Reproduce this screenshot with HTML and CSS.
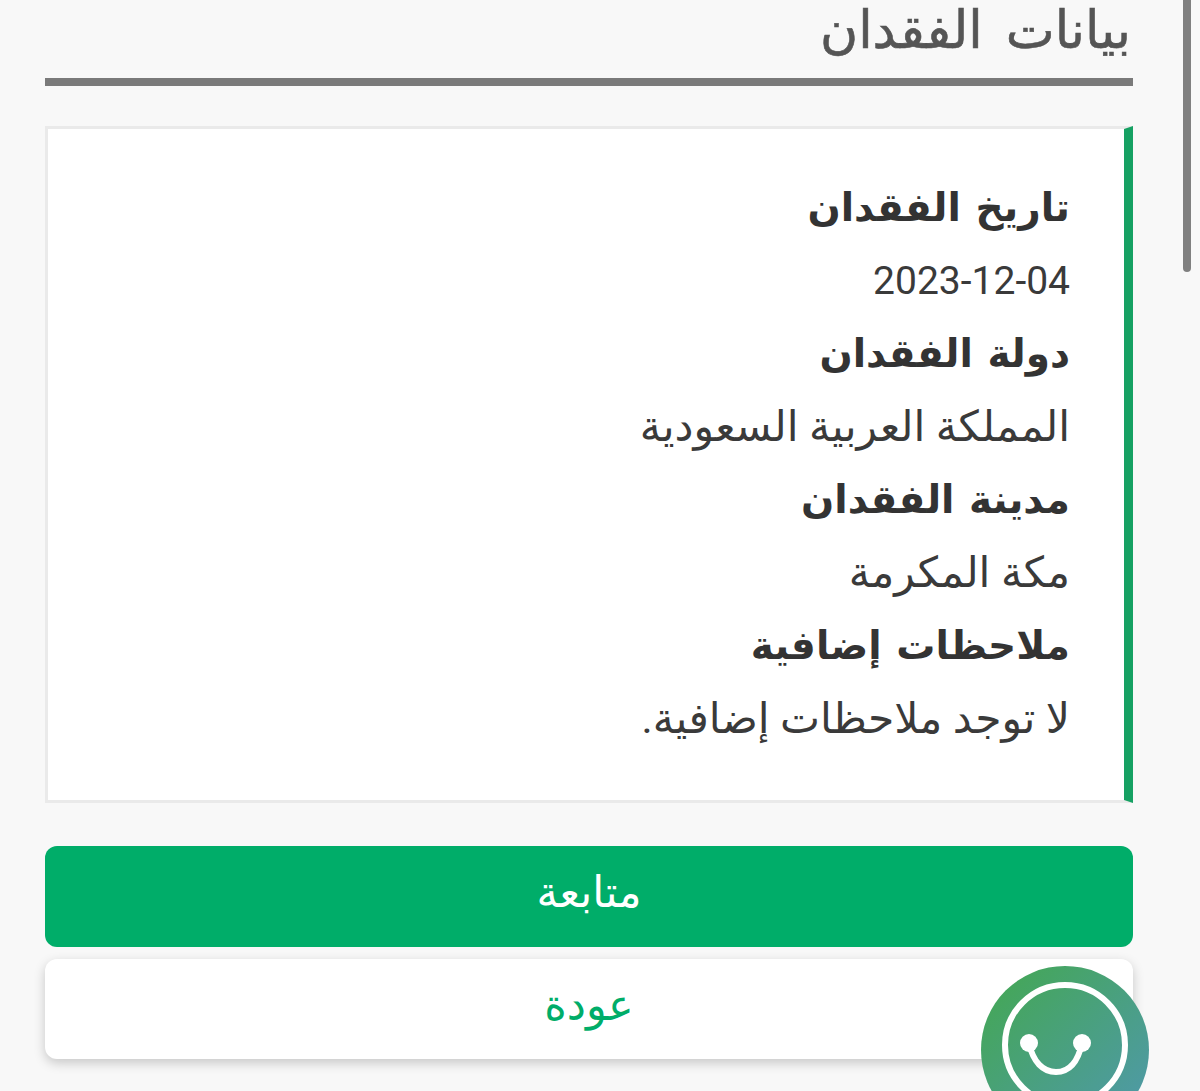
FILE: index.html
```html
<!DOCTYPE html>
<html lang="ar" dir="rtl">
<head>
    <meta charset="UTF-8">
    <meta name="viewport" content="width=device-width, initial-scale=1.0">
    <title>بيانات الفقدان</title>
    <link rel="stylesheet" href="styles.css">
</head>
<body>
    <div class="page">
        <h2 class="section-title">بيانات الفقدان</h2>

        <div class="details-card">
            <div class="detail-label">تاريخ الفقدان</div>
            <div class="detail-value detail-date">2023-12-04</div>
            <div class="detail-label">دولة الفقدان</div>
            <div class="detail-value">المملكة العربية السعودية</div>
            <div class="detail-label">مدينة الفقدان</div>
            <div class="detail-value">مكة المكرمة</div>
            <div class="detail-label">ملاحظات إضافية</div>
            <div class="detail-value">لا توجد ملاحظات إضافية.</div>
        </div>

        <div class="actions">
            <button class="btn btn-primary">متابعة</button>
            <button class="btn btn-secondary">عودة</button>
        </div>
    </div>

    <div class="scroll-thumb"></div>

    <div class="chat-bubble">
        <svg viewBox="0 0 168 168" width="168" height="168">
            <circle cx="84" cy="79" r="60" fill="none" stroke="#fff" stroke-width="6"/>
            <path d="M48 77 C52 96 62 106 75 106 C88 106 97 96 101 77" fill="none" stroke="#fff" stroke-width="6" stroke-linecap="round"/>
            <circle cx="48" cy="77" r="9" fill="#fff"/>
            <circle cx="101" cy="77" r="9" fill="#fff"/>
        </svg>
    </div>
</body>
</html>
```

FILE: styles.css
```css
html, body {
    height: 1091px;
    margin: 0;
    overflow: hidden;
}
body {
    position: relative;
    background-color: #f8f8f8;
    font-family: "Roboto", "DejaVu Sans", sans-serif;
    color: #333;
}
.page {
    padding: 0 67px 0 45px;
}
.section-title {
    margin: 0 0 40px;
    height: 78px;
    line-height: 62px;
    padding-right: 2px;
    border-bottom: 8px solid #7a7a7a;
    font-size: 52px;
    font-weight: normal;
    word-spacing: 10px;
    -webkit-text-stroke: 0.6px #555;
    color: #555;
}
.details-card {
    height: 677px;
    box-sizing: border-box;
    padding: 44px 54px 0 0;
    background: white;
    border: 3px solid #eaeaea;
    border-right: 9px solid #16a163;
}
.detail-label, .detail-value {
    height: 73px;
    line-height: 70px;
    white-space: nowrap;
}
.detail-label {
    font-size: 39px;
    font-weight: bold;
    word-spacing: 5px;
}
.detail-value {
    font-size: 42.5px;
    color: #3a3a3a;
}
.detail-date {
    font-size: 39px;
}
.actions {
    margin-top: 43px;
    display: flex;
    flex-direction: column;
    gap: 12px;
}
.btn {
    height: 100px;
    padding: 0 0 9px;
    border: none;
    border-radius: 12px;
    font-family: inherit;
    font-size: 43px;
}
.btn-primary {
    height: 101px;
    background-color: #00ad69;
    color: white;
}
.btn-secondary {
    background: white;
    color: #00ad69;
    box-shadow: 0 4px 12px rgba(0,0,0,0.2);
}
.scroll-thumb {
    position: absolute;
    top: 0;
    right: 9px;
    width: 8px;
    height: 272px;
    border-radius: 0 0 4px 4px;
    background-color: #808080;
}
.chat-bubble {
    position: absolute;
    left: 981px;
    top: 966px;
    width: 168px;
    height: 168px;
    border-radius: 50%;
    background: linear-gradient(135deg, #43a84f, #5098b0);
}
```
